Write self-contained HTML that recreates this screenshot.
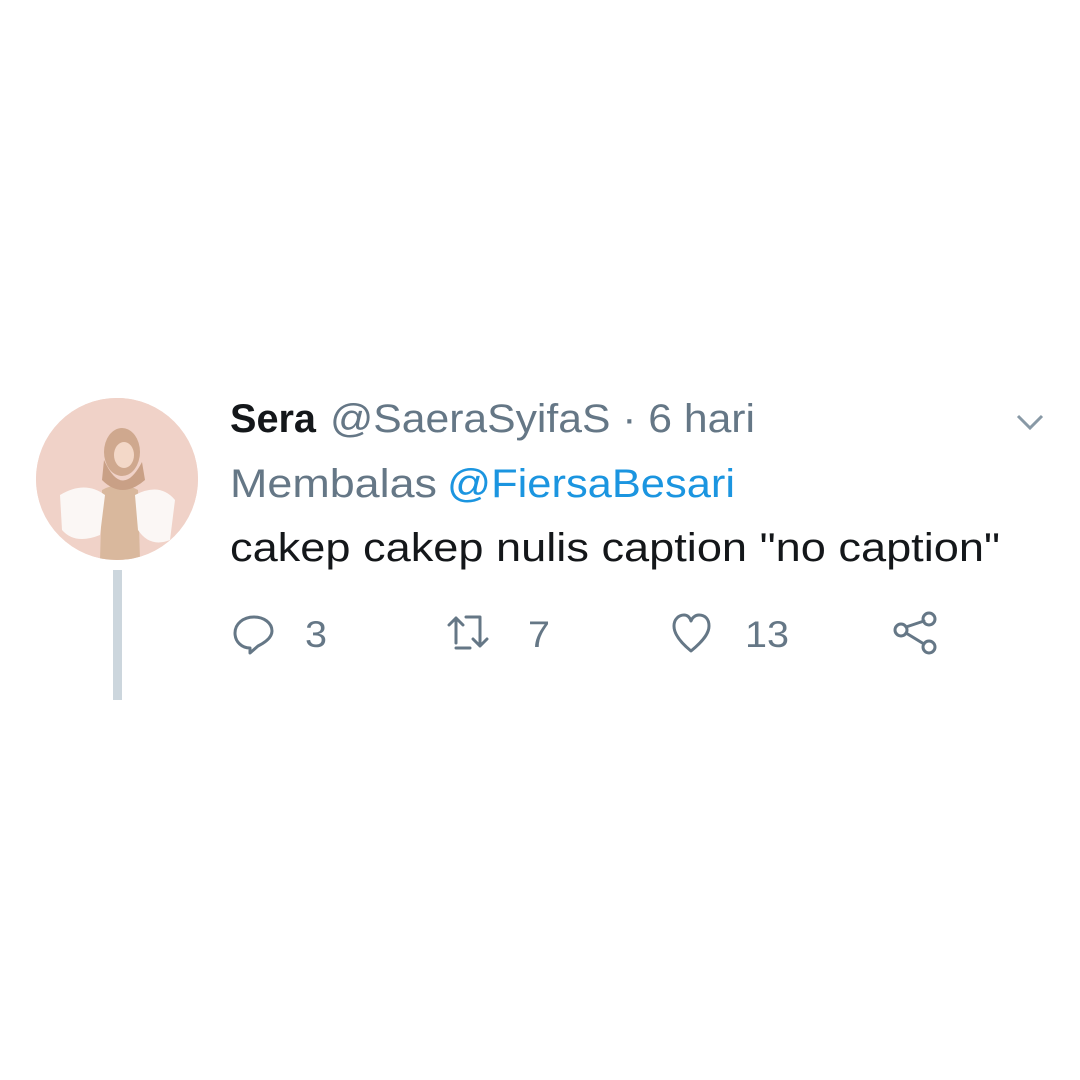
<!DOCTYPE html>
<html><head><meta charset="utf-8"><style>html,body{margin:0;padding:0;background:#fff;width:1080px;height:1080px;overflow:hidden}</style></head>
<body>
<svg width="1080" height="1080" viewBox="0 0 1080 1080" xmlns="http://www.w3.org/2000/svg" font-family="Liberation Sans, sans-serif">
<defs><clipPath id="c"><circle cx="117" cy="479" r="81"/></clipPath></defs>
<circle cx="117" cy="479" r="81" fill="#f1d3c9"/>
<g clip-path="url(#c)">
<rect x="30" y="398" width="180" height="162" fill="#f0d2c8"/>
<path d="M100 560 L102 490 Q120 480 138 490 L140 560 Z" fill="#d9b89d"/>
<path d="M60 495 Q85 480 105 495 L100 535 Q75 545 62 530 Z" fill="#fbf7f5"/>
<path d="M135 495 Q160 482 175 500 L170 540 Q150 548 138 530 Z" fill="#fbf7f5"/>
<ellipse cx="122" cy="452" rx="18" ry="24" fill="#cfa88e"/>
<ellipse cx="124" cy="455" rx="10" ry="13" fill="#f3d8c8"/>
<path d="M104 460 Q122 500 142 462 L145 480 Q122 500 102 480 Z" fill="#c9a086"/>
</g>
<rect x="113" y="570" width="9" height="130" fill="#ccd6dd"/>
<text x="230" y="432" font-size="40" fill="#14171a" font-weight="bold" textLength="86" lengthAdjust="spacingAndGlyphs">Sera</text>
<text x="330" y="432" font-size="40" fill="#657786" textLength="425" lengthAdjust="spacingAndGlyphs">@SaeraSyifaS · 6 hari</text>
<text x="230" y="497" font-size="40" fill="#657786" textLength="207" lengthAdjust="spacingAndGlyphs">Membalas</text>
<text x="447" y="497" font-size="40" fill="#1b95e0" textLength="288" lengthAdjust="spacingAndGlyphs">@FiersaBesari</text>
<text x="230" y="561" font-size="40" fill="#14171a" textLength="770" lengthAdjust="spacingAndGlyphs">cakep cakep nulis caption "no caption"</text>
<path d="M1018 416 L1030 428 L1042 416" fill="none" stroke="#8899a6" stroke-width="3"/>
<g fill="none" stroke="#657786" stroke-width="3" stroke-linejoin="round" stroke-linecap="round">
<path d="M254 617 C243 617 235 624 235 633 C235 642 242 648 250 648 L250 653 L258 646 C264 643 272 638 272 631 C272 623 264 617 254 617 Z"/>
<path d="M456 643 V618 M449 625 L456 618 L463 625 M456 648 H470 M466 617 H480 V646 M473 639 L480 646 L487 639"/>
<path d="M691 651 C680 642 674 634 674 626 C674 619 679 615 684 615 C688 615 690 618 691 621 C692 618 695 615 699 615 C705 615 709 619 709 626 C709 634 702 642 691 651 Z"/>
<circle cx="929" cy="619" r="6"/><circle cx="901" cy="630" r="6"/><circle cx="929" cy="647" r="6"/>
<path d="M906 627 L924 621 M906 633 L924 644"/>
</g>
<g font-size="37" fill="#657786">
<text x="305" y="647" textLength="22" lengthAdjust="spacingAndGlyphs">3</text>
<text x="528" y="647" textLength="22" lengthAdjust="spacingAndGlyphs">7</text>
<text x="745" y="647" textLength="44" lengthAdjust="spacingAndGlyphs">13</text>
</g>
</svg>
</body></html>
